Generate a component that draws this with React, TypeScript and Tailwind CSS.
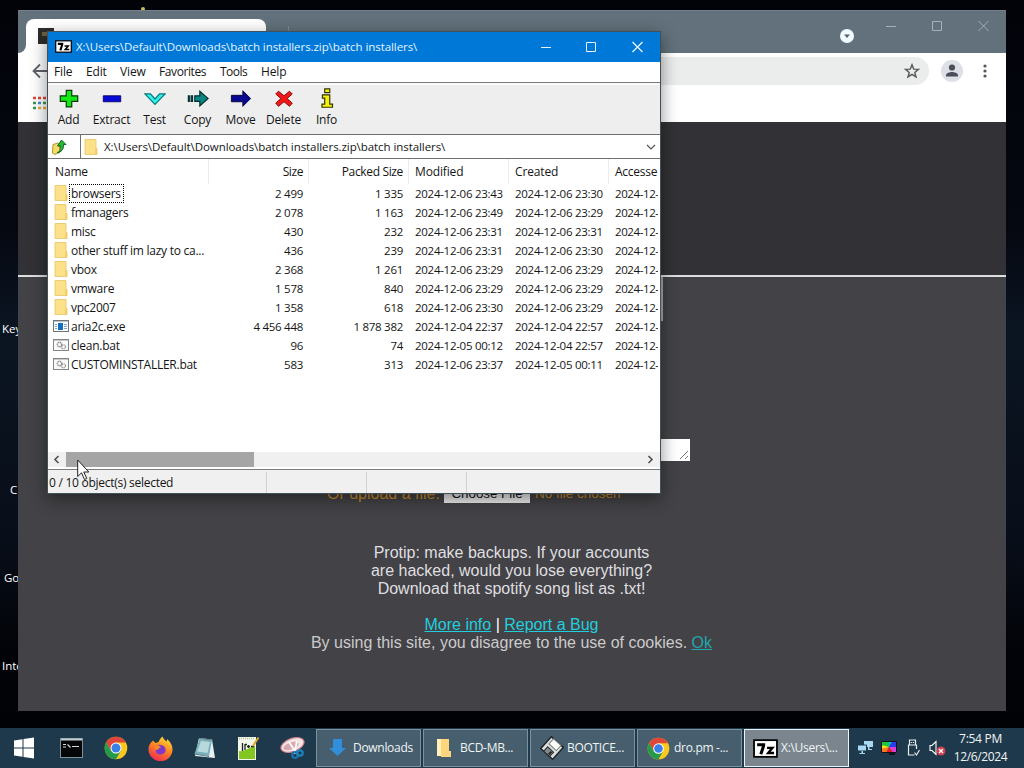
import React from "react";

const UI = "font-['Open_Sans','Noto_Sans',sans-serif]";

type Row = [kind: "dir" | "exe" | "bat", name: string, size: string, packed: string, modified: string, created: string];

const rows: Row[] = [
  ["dir", "browsers", "2 499", "1 335", "2024-12-06 23:43", "2024-12-06 23:30"],
  ["dir", "fmanagers", "2 078", "1 163", "2024-12-06 23:49", "2024-12-06 23:29"],
  ["dir", "misc", "430", "232", "2024-12-06 23:31", "2024-12-06 23:31"],
  ["dir", "other stuff im lazy to ca...", "436", "239", "2024-12-06 23:31", "2024-12-06 23:30"],
  ["dir", "vbox", "2 368", "1 261", "2024-12-06 23:29", "2024-12-06 23:29"],
  ["dir", "vmware", "1 578", "840", "2024-12-06 23:29", "2024-12-06 23:29"],
  ["dir", "vpc2007", "1 358", "618", "2024-12-06 23:30", "2024-12-06 23:29"],
  ["exe", "aria2c.exe", "4 456 448", "1 878 382", "2024-12-04 22:37", "2024-12-04 22:57"],
  ["bat", "clean.bat", "96", "74", "2024-12-05 00:12", "2024-12-04 22:57"],
  ["bat", "CUSTOMINSTALLER.bat", "583", "313", "2024-12-06 23:37", "2024-12-05 00:11"],
];

function Folder() {
  return (
    <svg width="16" height="16" viewBox="0 0 16 16">
      <path d="M2 .5h11v15H2z" fill="#fbe18a" />
      <path d="M12 9.500h2v6h-2z" fill="#f3d06a" />
      <path d="M2 .5h11v9h1v6H2z" fill="none" stroke="#eac86c" strokeWidth=".9" />
    </svg>
  );
}

function ExeIcon() {
  return (
    <svg width="16" height="16" viewBox="0 0 16 16">
      <rect x=".5" y="2.5" width="15" height="11" fill="#fdfdfd" stroke="#70757a" />
      <path d="M1 3.5h14" stroke="#b9c3cc" />
      <rect x="5" y="5" width="5" height="7" fill="#1570bd" />
      <path d="M2 6.5h2M2 8.5h2M2 10.5h2M11 6.5h3M11 8.5h3M11 10.5h3" stroke="#7ea9cb" />
    </svg>
  );
}

function BatIcon() {
  return (
    <svg width="16" height="16" viewBox="0 0 16 16">
      <rect x=".5" y="2.5" width="15" height="11" fill="#fafafa" stroke="#858585" />
      <path d="M1 3.5h14" stroke="#c9c9c9" />
      <circle cx="6.5" cy="7.5" r="2.2" fill="none" stroke="#8f8f8f" strokeWidth="1.4" strokeDasharray="1.4 .5" />
      <circle cx="10.5" cy="9.8" r="2" fill="none" stroke="#9a9a9a" strokeWidth="1.3" strokeDasharray="1.2 .5" />
    </svg>
  );
}

function SevenZip({ w, h }: { w: number; h: number }) {
  return (
    <svg width={w} height={h} viewBox="0 0 24 18">
      <rect x="1" y="1" width="22" height="16" fill="#fff" stroke="#000" strokeWidth="1.700" />
      <path d="M4 5.300h6.200v1L7.500 14.500" fill="none" stroke="#000" strokeWidth="2.900" />
      <path d="M13.500 8.300h5.200l-4.200 5h5.700" fill="none" stroke="#000" strokeWidth="2.200" />
    </svg>
  );
}

function ChromeLogo({ s }: { s: number }) {
  return (
    <svg width={s} height={s} viewBox="0 0 24 24">
      <circle cx="12" cy="12" r="11.3" fill="#fbc81e" />
      <path d="M2.200 6.400A11.300 11.300 0 0 1 21.800 6.400L12 6.400 7.100 14.900z" fill="#e0453a" />
      <path d="M2.200 6.350 7.100 14.850 12 17.600 16.900 14.850 12 23.300A11.300 11.300 0 0 1 2.200 6.350z" fill="#269a4c" />
      <circle cx="12" cy="12" r="5.500" fill="#fff" />
      <circle cx="12" cy="12" r="4.500" fill="#387fe8" />
    </svg>
  );
}

const tools: { label: string; icon: React.ReactNode }[] = [
  { label: "Add", icon: <path d="M9 2.500h6v6h6.500v6H15v6H9v-6H2.500v-6H9z" fill="#13e913" stroke="#07380a" strokeWidth="1.300" /> },
  { label: "Extract", icon: <path d="M2.500 8.500h19v6.500h-19z" fill="#0808d8" stroke="#05056a" /> },
  { label: "Test", icon: <path d="M1 6.500h6l5 5.500 5-5.500h6L12 18z" fill="#2ff5f0" stroke="#087575" strokeWidth="1.300" /> },
  {
    label: "Copy",
    icon: (
      <g fill="#078686" stroke="#042f2f" strokeWidth="1.300">
        <path d="M8.500 8.500H14V3.500l9 8-9 8v-5H8.500z" />
        <path d="M1.500 8.500h1v6h-1zM4.500 8.500h1.500v6h-1.500z" />
      </g>
    ),
  },
  { label: "Move", icon: <path d="M1.500 8H14V3l8.500 8.500-8.500 8.500v-5H1.500z" fill="#080890" stroke="#03033c" /> },
  { label: "Delete", icon: <path d="m6 3.500 6 5 6-5 3 3-5.500 5 5.500 5-3 3.500-6-5-6 5-3-3.500 5.500-5-5.500-5z" fill="#f21818" stroke="#7a0707" /> },
  {
    label: "Info",
    icon: (
      <g fill="#f3f30c" stroke="#343400" strokeWidth="1.300">
        <path d="M9.500 1h5.500v4H9.500z" />
        <path d="M7 7.500h8v10h3v3.500H6.500v-3.500h3v-6.500H7z" />
      </g>
    ),
  },
];

function BrowserWindow() {
  return (
    <section className="absolute left-[18px] top-[10px] flex h-[701px] w-[988px] flex-col overflow-hidden bg-[#434246] font-['Liberation_Sans',Arial,sans-serif]">
      <header className="flex h-[43px] shrink-0 items-end border-t border-[#737f89] bg-[#62717b]">
        <div className="flex h-[34px] w-2 items-end bg-white">
          <div className="h-full w-full rounded-br-lg bg-[#62717b]" />
        </div>
        <div className="flex h-[34px] w-[240px] rounded-t-lg bg-white pl-3 pt-[9px]">
          <div className="h-4 w-4 bg-[#2d2c29] p-1">
            <div className="h-1 w-2 bg-[#70613c]" />
          </div>
        </div>
        <div className="mb-[18px] ml-[22px] h-[9px] w-px bg-[#7b8d99]" />
        <svg className="mb-[9px] ml-auto" width="16" height="16" viewBox="0 0 16 16">
          <circle cx="8" cy="8" r="7" fill="#f1faff" />
          <path d="M5 6.500h6L8 10z" fill="#52616c" />
        </svg>
        <svg className="mb-[21px] ml-[31px] mr-[14px]" width="106" height="12" viewBox="0 0 106 12" fill="none" stroke="#a7b0b8">
          <path d="M0 6.500h10M46.500 1.500h9v9h-9zM92.500 1l10 10M102.500 1l-10 10" />
        </svg>
      </header>
      <div className="flex h-[36px] shrink-0 items-center bg-white">
        <svg className="ml-[14px]" width="17" height="16" viewBox="0 0 17 16" fill="none" stroke="#5f6368" strokeWidth="1.800">
          <path d="M16 8H2M8 1.500 1.500 8 8 14.500" />
        </svg>
        <div className="ml-[60px] flex h-7 flex-1 items-center justify-end rounded-full bg-[#ebecec] pr-[9px]">
          <svg width="16" height="16" viewBox="0 0 16 16" fill="none" stroke="#56565c" strokeWidth="1.400">
            <path d="m8 1.800 1.700 4.300 4.700.300-3.600 3 1.200 4.500L8 11.400l-4 2.500 1.200-4.500-3.600-3 4.700-.300z" />
          </svg>
        </div>
        <svg className="ml-3" width="22" height="22" viewBox="0 0 22 22">
          <circle cx="11" cy="11" r="11" fill="#dde0e6" />
          <circle cx="11" cy="7.500" r="3.100" fill="#4b4d59" />
          <path d="M5 16.500v-1.300C5 13 9 12 11 12s6 1 6 3.200v1.300z" fill="#4b4d59" />
        </svg>
        <svg className="ml-[20px] mr-[19px]" width="4" height="14" viewBox="0 0 4 14" fill="#55565b">
          <circle cx="2" cy="2" r="1.600" />
          <circle cx="2" cy="7" r="1.600" />
          <circle cx="2" cy="12" r="1.600" />
        </svg>
      </div>
      <div className="h-[33px] shrink-0 bg-white pl-[15px] pt-[7px]">
        <svg width="14" height="14" viewBox="0 0 14 14">
          <path d="M0 2h3M5 2h3M10 2h3" stroke="#df4638" strokeWidth="2.500" />
          <path d="M0 7h3M10 7h3" stroke="#359a54" strokeWidth="2.500" />
          <path d="M5 7h3" stroke="#4285d4" strokeWidth="2.500" />
          <path d="M0 12h3" stroke="#359a54" strokeWidth="2.500" />
          <path d="M5 12h3M10 12h3" stroke="#e5a63d" strokeWidth="2.500" />
        </svg>
      </div>
      <div className="h-[155px] shrink-0 border-b-2 border-[#dededf] bg-[#323135]" />
      <div className="h-[44px] w-[645px] shrink-0 border-r-2 border-[#a9a9aa]" />
      <div className="ml-[332px] mt-[118px] flex h-[22px] w-[340px] shrink-0 items-end justify-end bg-white p-px">
        <svg width="10" height="10" viewBox="0 0 10 10" stroke="#777">
          <path d="m1 9 8-8M6 9l3-3" />
        </svg>
      </div>
      <div className="mt-[22px] flex h-[20px] shrink-0 items-center whitespace-nowrap pl-[309px] text-[16px] leading-5 text-[#c88c2c]">
        <span className="w-[117px] pt-px">Or upload a file:</span>
        <span className="mr-[5px] h-5 w-[86px] bg-[#eeeeee] pt-px text-center text-[13.333px] leading-5 text-[#111]">Choose File</span>
        <span className="pt-px text-[13.500px]">No file chosen</span>
      </div>
      <div className="mt-[41px] pr-px text-center text-[16px] leading-[18px] text-[#dfdfe0]">
        <p>Protip: make backups. If your accounts</p>
        <p>are hacked, would you lose everything?</p>
        <p>Download that spotify song list as .txt!</p>
        <p className="mt-[18px] text-white">
          <a className="text-[#22cfdf] underline">More info</a> | <a className="text-[#22cfdf] underline">Report a Bug</a>
        </p>
        <p className="text-[#cbcbcc]">
          By using this site, you disagree to the use of cookies. <a className="text-[#20a7af] underline">Ok</a>
        </p>
      </div>
    </section>
  );
}

const cols = "grid grid-cols-[161px_100px_100px_100px_100px_50px]";

function ArchiveWindow() {
  return (
    <section className={`absolute left-[47px] top-[31px] flex h-[463px] w-[614px] flex-col overflow-hidden border border-[#40515b] bg-white text-[11.500px] tracking-[-0.280px] text-[#151515] shadow-[0_5px_16px_rgba(0,0,0,0.45)] ${UI}`}>
      <header className="flex h-[30px] shrink-0 items-center bg-[#0078d7] pb-px pl-[7px] text-white">
        <SevenZip w={17} h={13} />
        <span className="ml-1 w-[464px] whitespace-nowrap text-[11.500px] tracking-[-0.070px] text-[#e4f4ff]">X:\Users\Default\Downloads\batch installers.zip\batch installers\</span>
        <svg width="104" height="12" viewBox="0 0 104 12" fill="none" stroke="#e8f5ff">
          <path d="M1 6.500h10M46.500 1.500h9v9h-9z" />
          <path d="M92.500 1l10 10M102.500 1l-10 10" strokeWidth="1.300" />
        </svg>
      </header>
      <nav className="flex h-[21px] shrink-0 items-center border-b border-[#7a7a7a] text-[12px] tracking-[-0.150px]">
        <span className="ml-[6px] w-[32px]">File</span>
        <span className="w-[34px]">Edit</span>
        <span className="w-[39px]">View</span>
        <span className="w-[61px] tracking-[-0.400px]">Favorites</span>
        <span className="w-[41px] tracking-[-0.500px]">Tools</span>
        <span>Help</span>
      </nav>
      <div className="flex h-[52px] shrink-0 border-b border-[#707070] bg-[#eeeeee] pt-[5px] shadow-[inset_0_2px_0_#fafafa]">
        {tools.map((t) => (
          <div key={t.label} className="flex w-[43px] shrink-0 flex-col items-center whitespace-nowrap text-[12px] leading-4 tracking-[-0.200px] first:ml-[-1px]">
            <svg width="22" height="22" viewBox="0 0 24 24">{t.icon}</svg>
            <span className="mt-[2px]">{t.label}</span>
          </div>
        ))}
      </div>
      <div className="flex h-[24px] shrink-0 border-b border-[#707070]">
        <div className="flex w-[33px] shrink-0 items-center border-r border-[#707070] pl-[4px]">
          <svg width="16" height="16" viewBox="0 0 16 16">
            <path d="M1 5.500 6 4l1.500 2.500v7L3 15.500.500 14z" fill="#f4dc65" stroke="#ae9637" />
            <path d="M5 13.500c3.500-.500 4-3 3.500-6.500H5.500L9.500 1 14 5.500h-2.500c.500 5-2.500 8-6.500 8z" fill="#27b933" stroke="#0f6923" />
          </svg>
        </div>
        <div className="flex flex-1 items-center pl-[2px]">
          <Folder />
          <span className="ml-[5px] flex-1 text-[11.500px] tracking-[-0.070px]">X:\Users\Default\Downloads\batch installers.zip\batch installers\</span>
          <svg className="mr-[4px]" width="10" height="6" viewBox="0 0 10 6" fill="none" stroke="#555" strokeWidth="1.200">
            <path d="m1 1 4 4 4-4" />
          </svg>
        </div>
      </div>
      <div className={`${cols} h-[25px] w-[610px] shrink-0 overflow-hidden text-[12px] leading-[25px] tracking-[-0.150px]`}>
        <span className="border-r border-[#ececec] pl-[7px]">Name</span>
        <span className="border-r border-[#ececec] pr-[5px] text-right tracking-[-0.400px]">Size</span>
        <span className="whitespace-nowrap border-r border-[#ececec] pr-[5px] text-right tracking-[-0.350px]">Packed Size</span>
        <span className="border-r border-[#ececec] pl-[6px]">Modified</span>
        <span className="border-r border-[#ececec] pl-[6px]">Created</span>
        <span className="pl-[6px] tracking-[-0.250px]">Accesse</span>
      </div>
      <div className="h-[268px] w-[610px] shrink-0 overflow-hidden">
        {rows.map(([kind, name, size, packed, modified, created], i) => (
          <div key={name} className={`${cols} h-[19px] items-center whitespace-nowrap leading-[18px]`}>
            <div className="flex h-[19px] items-center pl-[5px]">
              <span className="-mt-[2px]">{kind === "dir" ? <Folder /> : kind === "exe" ? <ExeIcon /> : <BatIcon />}</span>
              <span className={`h-[19px] pl-[2px] text-[12px] leading-[19px] tracking-[-0.260px] ${i === 0 ? "w-[55px] outline-1 -outline-offset-1 outline-dotted outline-black" : ""}`}>{name}</span>
            </div>
            <span className="pr-[6px] text-right">{size}</span>
            <span className="pr-[6px] text-right">{packed}</span>
            <span className="pl-[6px]">{modified}</span>
            <span className="pl-[6px]">{created}</span>
            <span className="pl-[6px] tracking-[-0.400px]">2024-12-</span>
          </div>
        ))}
      </div>
      <div className="flex h-[15px] shrink-0 items-center bg-[#f0f0f0]">
        <svg className="ml-[5px] mr-[6px]" width="7" height="9" viewBox="0 0 7 9" fill="none" stroke="#505050" strokeWidth="1.600">
          <path d="M5.500 1 2 4.500 5.500 8" />
        </svg>
        <div className="h-full w-[188px] bg-[#a5a5a5]" />
        <svg className="ml-auto mr-[6px]" width="7" height="9" viewBox="0 0 7 9" fill="none" stroke="#505050" strokeWidth="1.600">
          <path d="M1.500 1 5 4.500 1.500 8" />
        </svg>
      </div>
      <footer className="mt-[2px] flex min-h-0 flex-1 items-stretch border-t border-[#777d80] bg-[#f0f0f0] pt-[2px] text-[12px] leading-[21px] tracking-[-0.270px]">
        <span className="w-[219px] border-r border-[#d2d2d2] pl-px">0 / 10 object(s) selected</span>
        <span className="w-[100px] border-r border-[#d2d2d2]" />
        <span className="w-[100px] border-r border-[#d2d2d2]" />
      </footer>
    </section>
  );
}

const pinned: React.ReactNode[] = [
  <svg width="22" height="22" viewBox="0 0 22 22" fill="#fff">
    <path d="m1 3.500 8.500-1.300v8.300H1zM10.500 2 21 .500v10H10.500zM1 11.500h8.500v8.200L1 18.500zM10.500 11.500H21v10L10.500 20z" />
  </svg>,
  <svg width="23" height="20" viewBox="0 0 23 20">
    <rect x=".500" y=".500" width="22" height="19" fill="#050607" stroke="#80909b" />
    <path d="M1 1.500h21" stroke="#c4ced3" strokeWidth="2" />
    <path d="M3 6.500h3M3 9h3M7.500 6.500l3 3M12 8.500h7" stroke="#d3d9dc" strokeWidth="1.200" />
  </svg>,
  <ChromeLogo s={24} />,
  <svg width="25" height="25" viewBox="0 0 25 25">
    <defs>
      <linearGradient id="fox" x1=".8" y1="0" x2=".3" y2="1">
        <stop offset="0" stopColor="#ffe33d" />
        <stop offset=".45" stopColor="#ff8b1f" />
        <stop offset="1" stopColor="#ef2953" />
      </linearGradient>
    </defs>
    <path d="M5 4.500 7.500 7l3-1c1-2 2-4 4-5.500 1 2.500 2.500 3.500 4 5 .500-1 .500-2 .500-2.500 3 2.500 5.500 6 5.500 10.500A12 12 0 0 1 .500 13c0-3.500 1.500-6 4.500-8.500z" fill="url(#fox)" />
    <path d="M8 10c2-2 7-2 9 1.500 2 4-1 7-4.500 7S7 16 8 14l3.500-1.500z" fill="#8037cb" />
    <path d="M7 9.500c2 0 4-1 6 2-2 0-3 1-3 2H7z" fill="#f58a24" />
  </svg>,
  <svg width="23" height="23" viewBox="0 0 23 23">
    <path d="m6 1 13 1.500 3 18.500-20-2z" fill="#e9f0f1" />
    <path d="M6.500 2 19 3l-3 16L1.500 17z" fill="#79afb9" />
    <path d="m8 4 9 1-2.500 11L4 14.500z" fill="#b7d9dd" />
    <path d="M6 1.500 19.500 3M1.500 17l14.500 2.500" stroke="#577d87" />
  </svg>,
  <svg width="24" height="25" viewBox="0 0 24 25">
    <path d="M2 1h18v23H2z" fill="#f4f6ec" />
    <path d="M3 15c6 1 10-4 16-5v13H3z" fill="#82c622" />
    <path d="M3 2.500h16" stroke="#b0c697" strokeWidth="1.500" strokeDasharray="1 1" />
    <path d="M6.500 7v8M9 8v6M9 8.500h2M11 10.500h3M12.500 9v3M15 10.500h3" stroke="#202620" strokeWidth="1.300" />
    <path d="M17 10 22.500 1.500" stroke="#dea52d" strokeWidth="2" />
  </svg>,
  <svg width="25" height="25" viewBox="0 0 25 25">
    <ellipse cx="12.500" cy="9" rx="12" ry="6.500" fill="#f5e5e6" stroke="#d3838d" strokeWidth="1.200" transform="rotate(-20 12.500 9)" />
    <ellipse cx="11" cy="10" rx="8" ry="3.500" fill="#d8a9af" transform="rotate(-20 11 10)" />
    <path d="m9 6 8 12M17 5l-3 13" stroke="#f9fafa" strokeWidth="1.800" />
    <circle cx="15" cy="19" r="2.800" fill="none" stroke="#1d71aa" strokeWidth="2.200" />
    <circle cx="20" cy="17" r="2.700" fill="none" stroke="#1d83bf" strokeWidth="2.200" />
  </svg>,
];

const tasks: { label: string; icon: React.ReactNode; active?: boolean }[] = [
  {
    label: "Downloads",
    icon: (
      <svg width="24" height="24" viewBox="0 0 24 24">
        <path d="M7 3h9v9h4l-8.500 8L3 12h4z" fill="#318fd9" />
      </svg>
    ),
  },
  {
    label: "BCD-MB...",
    icon: (
      <svg width="24" height="24" viewBox="0 0 24 24">
        <path d="M4 3h11v15H4z" fill="#f5d681" />
        <path d="M7 3h9v12h2v6H8z" fill="#fbd67d" />
        <path d="M4 3h4v17H4z" fill="#fff0bd" />
      </svg>
    ),
  },
  {
    label: "BOOTICE...",
    icon: (
      <svg width="24" height="24" viewBox="0 0 24 24">
        <g transform="rotate(42 12 12)">
          <rect x="4" y="4" width="16" height="16" fill="#dce1df" stroke="#202528" strokeWidth="1.500" />
          <path d="M7 4h10v7H7z" fill="#fbfbf7" stroke="#727b7d" />
          <path d="M8 14h8v6H8z" fill="#83898b" stroke="#262c30" />
          <path d="M13 15h2v4h-2z" fill="#202528" />
        </g>
      </svg>
    ),
  },
  { label: "dro.pm -...", icon: <ChromeLogo s={23} /> },
  { label: "X:\\Users\\...", icon: <SevenZip w={25} h={19} />, active: true },
];

function Taskbar() {
  return (
    <footer className={`absolute bottom-0 left-0 flex h-10 w-[1024px] items-center overflow-hidden bg-[#1e394b] text-[12px] tracking-[-0.300px] text-[#f0f4f5] ${UI}`}>
      <div className="grid w-[316px] shrink-0 grid-cols-[48px_46px_44px_44px_44px_43px_47px]">
        {pinned.map((icon, i) => (
          <div key={i} className="flex items-center justify-center">{icon}</div>
        ))}
      </div>
      <div className="flex shrink-0 gap-[2px]">
        {tasks.map((t) => (
          <div key={t.label} className={`flex h-[38px] w-[105px] items-center whitespace-nowrap border pl-2 ${t.active ? "border-[#eef3f5] bg-[#7a858e]" : "border-[#7b929f] bg-[#465e6d]"}`}>
            <span className="flex w-[25px] shrink-0 justify-center">{t.icon}</span>
            <span className="ml-[3px]">{t.label}</span>
          </div>
        ))}
      </div>
      <div className="flex w-[100px] shrink-0 items-center gap-2 pl-[8px]">
        <svg width="16" height="16" viewBox="0 0 16 16" fill="#a9d9f2">
          <path d="M7 1h9v6H7z" />
          <path d="M.500 5h9v6h-9z" stroke="#1e394b" />
          <path d="M4.500 11h1.500v2h2v1H2.500v-1h2zM11 7h1.500v2H15v1h-4z" />
        </svg>
        <svg width="16" height="16" viewBox="0 0 16 16">
          <path d="M0 1h8v6H0z" fill="#18c837" />
          <path d="M8 1h4L8 7z" fill="#11afe2" />
          <path d="M12 1h4v6H8z" fill="#293cf0" />
          <path d="M16 7v6h-4L8 7z" fill="#e13dd6" />
          <path d="M8 7 5 13h7z" fill="#e71d22" />
          <path d="M0 7h8l-3 6H0z" fill="#f57b1c" />
          <path d="M0 5.500h3L8 7l-6 1.500H0z" fill="#f5df1c" />
          <path d="M.500 1.500h15v11H.500z" fill="none" stroke="#101319" />
          <path d="M8 13h6v2H8z" fill="#101319" />
        </svg>
        <svg width="16" height="18" viewBox="0 0 16 18" fill="none" stroke="#e7edef" strokeWidth="1.200">
          <path d="M4.500 6V1h6v5M11.500 10V6h-8v10h6M6.500 3v1M8.500 3v1M9.500 13.500l2 2.500 3-5" />
        </svg>
        <svg width="17" height="16" viewBox="0 0 17 16">
          <path d="M1 5.500h2l4-4v13l-4-4H1z" fill="none" stroke="#fff" strokeWidth="1.100" />
          <circle cx="12" cy="11" r="4.500" fill="#cf3e51" />
          <path d="m10 9 4 4m0-4-4 4" stroke="#fff" strokeWidth="1.300" />
        </svg>
      </div>
      <div className="-ml-[2px] flex-1 pr-[10px] text-center leading-[18px] tracking-[-0.300px]">
        <div>7:54 PM</div>
        <div className="tracking-[-0.380px]">12/6/2024</div>
      </div>
    </footer>
  );
}

export default function App() {
  return (
    <main className={`relative h-[768px] w-[1024px] overflow-hidden bg-[linear-gradient(180deg,#020309_0%,#050811_30%,#0b1522_43%,#080e19_70%,#020308_85%,#010205_100%)] ${UI}`}>
      <div className="absolute left-[141px] top-[7px] h-[4px] w-[4px] rounded-full bg-[#c9bd57]" />
      <div className="absolute left-[2px] top-[321px] text-[11.500px] leading-4 text-white">Key</div>
      <div className="absolute left-[10px] top-[482px] text-[11.500px] leading-4 text-white">C</div>
      <div className="absolute left-[4px] top-[570px] text-[11.500px] leading-4 text-white">Go</div>
      <div className="absolute left-[2px] top-[658px] text-[11.500px] leading-4 text-white">Inte</div>
      <BrowserWindow />
      <ArchiveWindow />
      <Taskbar />
      <svg className="absolute left-[77px] top-[459px]" width="14" height="22" viewBox="0 0 14 22">
        <path d="M.700 1v16.500l3.800-3.700 3 6.700 2.300-1-3-6.500h5z" fill="#fff" stroke="#222" />
      </svg>
    </main>
  );
}
